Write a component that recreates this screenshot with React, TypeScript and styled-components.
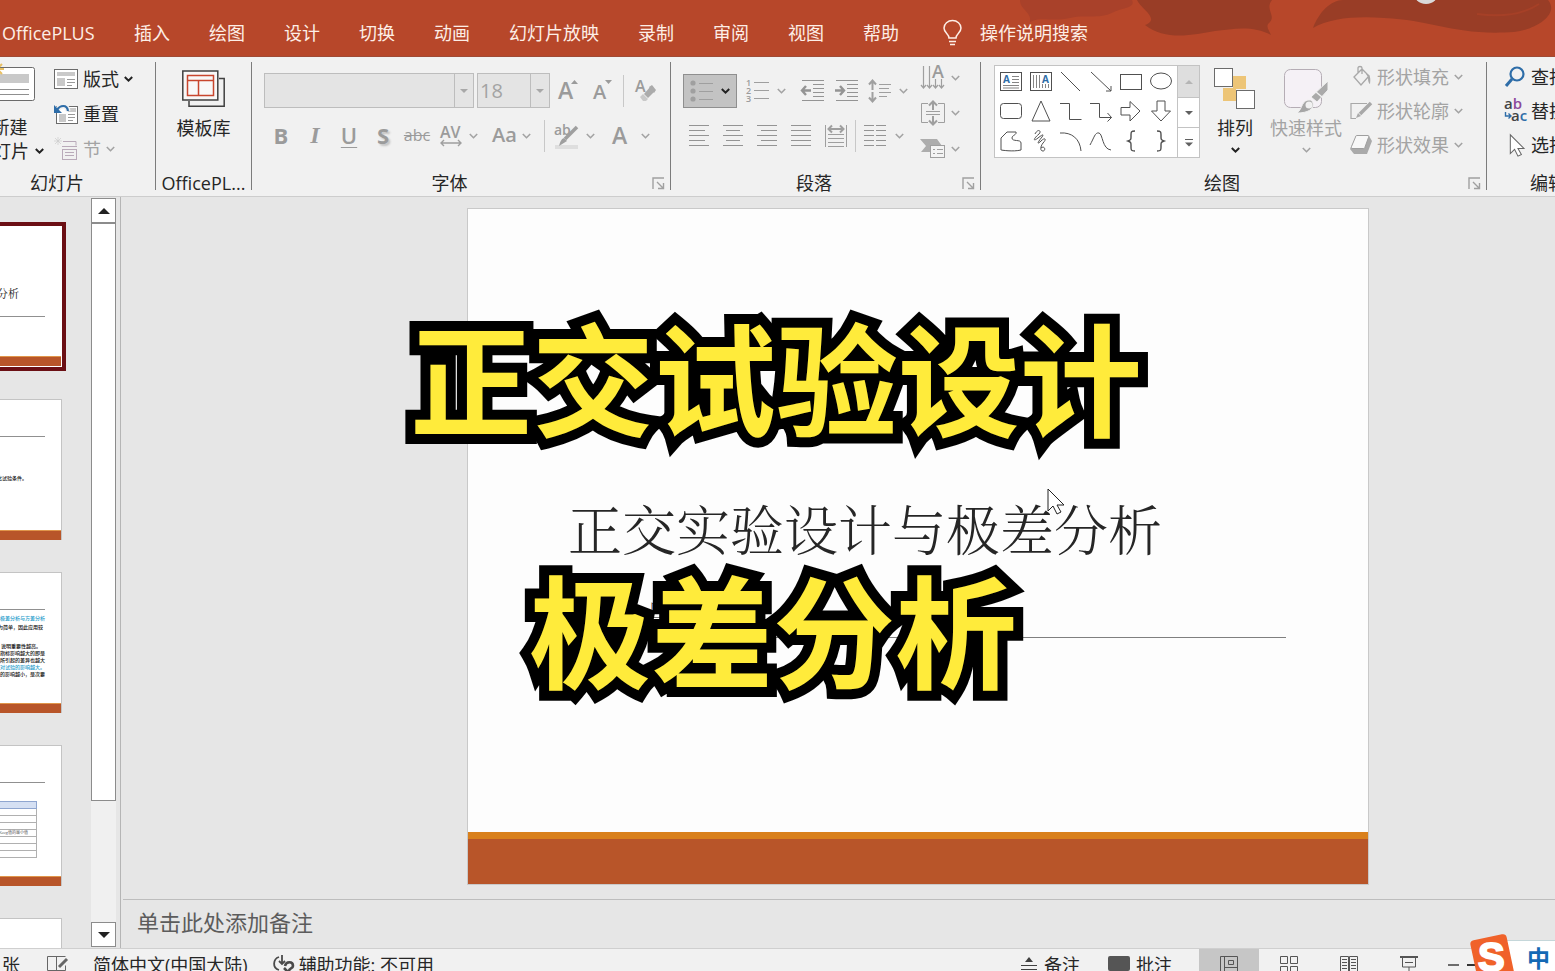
import React from 'react';
import styled, { createGlobalStyle, css } from 'styled-components';

const Global = createGlobalStyle`
  *, *::before, *::after { box-sizing: border-box; }
  body {
    margin: 0;
    font-family: 'Open Sans', 'Noto Sans CJK SC', sans-serif;
    font-size: 18px;
    line-height: 24px;
    color: #262626;
    background: #e6e6e6;
  }
  button, select, input, textarea { font: inherit; color: inherit; margin: 0; }
  button { background: none; border: 0; padding: 0; }
`;

const ink = '#404040';
const dim = '#a3a3a3';

/* ---------- shell ---------- */

const Shell = styled.div`
  position: relative;
  display: flex;
  flex-direction: column;
  height: 100vh;
  overflow: hidden;
`;

const TabBar = styled.header`
  position: relative;
  flex: none;
  height: 57px;
  padding: 9px 0 0 2px;
  background: #b7472a;
  border-bottom: 1px solid #a04a35;
  overflow: hidden;
`;

const Artwork = styled.svg`
  position: absolute;
  top: 0;
  right: 0;
`;

const Tabs = styled.nav`
  position: relative;
  display: flex;
  align-items: center;
  gap: 39px;
  height: 47px;
`;

const Tab = styled.button`
  flex: none;
  color: #fdeee6;
  white-space: nowrap;
`;

const FirstTab = styled(Tab)`
  width: 93px;
  text-align: left;
`;

const Search = styled(Tab)`
  display: flex;
  align-items: center;
  gap: 18px;
  margin-left: 5px;
`;

/* ---------- ribbon ---------- */

const Ribbon = styled.div`
  flex: none;
  display: flex;
  height: 140px;
  background: #f1f1f1;
  border-bottom: 1px solid #cdcdcd;
  overflow: hidden;
`;

const Divider = styled.div`
  flex: none;
  width: 1px;
  margin: 5px 0 6px;
  background: #7c7c7c;
`;

const Group = styled.section<{ $w: number; $shift?: number }>`
  flex: none;
  display: flex;
  flex-direction: column;
  width: ${(p) => p.$w}px;
  margin-left: ${(p) => p.$shift ?? 0}px;
`;

const GroupBody = styled.div<{ $pad?: string }>`
  display: flex;
  height: 114px;
  padding: ${(p) => p.$pad ?? '0'};
`;

const GroupFoot = styled.div`
  display: flex;
  align-items: center;
  height: 24px;
  padding: 0 5px;
`;

const GroupTitle = styled.h2<{ $inset?: boolean }>`
  flex: 1;
  margin: 0;
  padding-right: ${(p) => (p.$inset ? 10 : 0)}px;
  font-size: 18px;
  line-height: 24px;
  font-weight: 400;
  text-align: center;
  white-space: nowrap;
`;

const Column = styled.div<{ $gap?: number; $ml?: number }>`
  flex: none;
  display: flex;
  flex-direction: column;
  gap: ${(p) => p.$gap ?? 0}px;
  margin-left: ${(p) => p.$ml ?? 0}px;
`;

const Row = styled.div<{ $h: number }>`
  display: flex;
  align-items: center;
  height: ${(p) => p.$h}px;
`;

const Rule = styled.div<{ $m: string }>`
  width: 1px;
  height: 32px;
  margin: ${(p) => p.$m};
  background: #c8c8c8;
`;

const Tool = styled.button<{ $w: number; $on?: boolean; $gap?: number }>`
  flex: none;
  display: flex;
  align-items: center;
  justify-content: center;
  gap: ${(p) => p.$gap ?? 7}px;
  width: ${(p) => p.$w}px;
  height: 34px;
  color: ${dim};
  ${(p) =>
    p.$on &&
    css`
      background: #c3c3c3;
      border: 1px solid #8f8f8f;
      color: #222;
    `}
`;

const Line = styled.button<{ $h: number; $off?: boolean }>`
  flex: none;
  display: flex;
  align-items: center;
  gap: 5px;
  height: ${(p) => p.$h}px;
  white-space: nowrap;
  color: ${(p) => (p.$off ? dim : '#262626')};
`;

const Big = styled.button<{ $w: number; $off?: boolean; $pt?: number }>`
  flex: none;
  display: flex;
  flex-direction: column;
  align-items: center;
  width: ${(p) => p.$w}px;
  padding-top: ${(p) => p.$pt ?? 0}px;
  white-space: nowrap;
  color: ${(p) => (p.$off ? dim : '#262626')};
`;

const BigCaption = styled.span<{ $m?: string }>`
  display: flex;
  align-items: center;
  gap: 6px;
  margin: ${(p) => p.$m ?? '0'};
`;

const Combo = styled.label<{ $w: number }>`
  display: flex;
  width: ${(p) => p.$w}px;
  height: 35px;
  background: #e4e4e4;
  border: 1px solid #bdbdbd;
  & + & { margin-left: 3px; }
`;

const ComboSelect = styled.select`
  appearance: none;
  flex: 1;
  min-width: 0;
  padding: 0 2px;
  border: 0;
  background: transparent;
  font-size: 20px;
  line-height: 24px;
  color: ${dim};
  opacity: 1;
`;

const ComboArrow = styled.span`
  display: flex;
  align-items: center;
  justify-content: center;
  width: 19px;
  border-left: 1px solid #bdbdbd;
`;

const Glyph = styled.span<{ $size?: number; $weight?: number; $deco?: string }>`
  padding-bottom: 3px;
  font-size: ${(p) => p.$size ?? 22}px;
  line-height: 26px;
  font-weight: ${(p) => p.$weight ?? 600};
  color: #9b9b9b;
  text-decoration: ${(p) => p.$deco ?? 'none'};
  text-decoration-thickness: 1px;
  text-underline-offset: 3px;
`;

const Italic = styled(Glyph)`
  font-family: 'Liberation Serif', serif;
  font-style: italic;
`;

const Shadowed = styled(Glyph)`
  text-shadow: 2px 2px 2px #c4c4c4;
`;

const Gallery = styled.div`
  display: flex;
  width: 206px;
  height: 93px;
  border: 1px solid #c3c3c3;
  background: #fff;
`;

const Shapes = styled.div`
  flex: 1;
  display: grid;
  grid-template-columns: repeat(6, 30px);
  grid-template-rows: repeat(3, 30px);
  padding: 0 0 0 1px;
`;

const ShapeButton = styled.button`
  display: flex;
  align-items: center;
  justify-content: center;
`;

const GalleryNav = styled.div`
  display: grid;
  grid-template-rows: 31px 1fr 1fr;
  width: 22px;
  border-left: 1px solid #c3c3c3;
`;

const NavButton = styled.button<{ $off?: boolean }>`
  display: flex;
  align-items: center;
  justify-content: center;
  background: ${(p) => (p.$off ? '#dedede' : '#fff')};
  & + & { border-top: 1px solid #c3c3c3; }
`;

/* ---------- work area ---------- */

const Workspace = styled.div`
  flex: 1;
  min-height: 0;
  display: flex;
  background: #e6e6e6;
`;

const ThumbPane = styled.aside`
  flex: none;
  width: 91px;
  overflow: hidden;
`;

const ThumbList = styled.ol`
  display: flex;
  flex-direction: column;
  gap: 32px;
  width: 188px;
  margin: 29px 0 0 -126px;
  padding: 0;
  list-style: none;
`;

const Thumb = styled.li<{ $selected?: boolean }>`
  display: flex;
  flex-direction: column;
  align-items: flex-end;
  height: 141px;
  background: #fff;
  border: 1px solid #c4c4c4;
  border-bottom: 0;
  overflow: hidden;
  ${(p) =>
    p.$selected &&
    css`
      border: 1px solid #fff;
      outline: 4px solid #6b0f14;
    `}
`;

const ThumbFoot = styled.div`
  align-self: stretch;
  flex: none;
  height: 10px;
  margin-top: auto;
  background: #b85529;
  border-top: 1px solid #e0954a;
`;

const ThumbRule = styled.div<{ $top: number }>`
  flex: none;
  width: 154px;
  height: 1px;
  margin: ${(p) => p.$top}px 16px 0 0;
  background: #909090;
`;

const ThumbTitle = styled.div`
  margin: 57px 42px 0 0;
  font: 400 11px/18px 'SimSun', 'Noto Serif CJK SC', 'Noto Sans CJK SC', serif;
  white-space: nowrap;
`;

const ThumbText = styled.p<{ $top: number; $right: number }>`
  margin: ${(p) => p.$top}px ${(p) => p.$right}px 0 0;
  font-size: 5px;
  line-height: 7px;
  font-weight: 500;
  white-space: nowrap;
  text-align: right;
  color: #111;
`;

const Cyan = styled.span`
  color: #1d9ccb;
`;

const ThumbTable = styled.table`
  margin: 18px 24px 0 0;
  width: 140px;
  border-collapse: collapse;
  font-size: 4px;
  line-height: 6px;
  color: #555;
  th, td {
    height: 7px;
    padding: 0 8px 0 0;
    border: 1px solid #b0b0b0;
    font-weight: 400;
    text-align: right;
  }
  th { background: #d5e0f3; border-color: #8fa6d0; }
  td:first-child { width: 60px; }
`;

const ScrollBar = styled.div`
  flex: none;
  display: flex;
  flex-direction: column;
  width: 25px;
  margin: 1px 4px 1px 0;
  background: #f0f0f0;
`;

const ScrollButton = styled.button`
  display: flex;
  align-items: center;
  justify-content: center;
  height: 25px;
  background: #fff;
  border: 1px solid #8c8c8c;
`;

const ScrollThumb = styled.div`
  flex: 0 1 578px;
  background: #fff;
  border: 1px solid #8c8c8c;
`;

const ScrollTrack = styled.div`
  flex: 1 0 121px;
`;

const Editor = styled.main`
  flex: 1;
  min-width: 0;
  display: flex;
  flex-direction: column;
  border-left: 1px solid #b5b5b5;
  padding-left: 2px;
`;

const Canvas = styled.div`
  flex: 1;
  min-height: 0;
  display: flex;
  justify-content: center;
  align-items: flex-start;
  padding: 11px 0 0 158px;
`;

const Slide = styled.article`
  flex: none;
  display: flex;
  flex-direction: column;
  width: 902px;
  height: 677px;
  background: #fdfdfd;
  border: 1px solid #c9c9c9;
`;

const SlideTitle = styled.h1`
  margin: 283px 0 0 100px;
  font: 300 54px/72px 'SimSun', 'Noto Serif CJK SC', 'Noto Sans CJK SC', serif;
  white-space: nowrap;
  color: #262626;
`;

const SlideAuthor = styled.p`
  margin: 28px 0 0 180px;
  font: 300 22px/32px 'SimSun', 'Noto Serif CJK SC', 'Noto Sans CJK SC', serif;
  color: #555;
`;

const SlideRule = styled.div`
  height: 1px;
  margin: 13px 82px 0 81px;
  background: #7f7f7f;
`;

const SlideFoot = styled.div`
  height: 52px;
  margin-top: auto;
  background: #b85529;
  border-top: 7px solid #d9801c;
`;

const Notes = styled.textarea`
  flex: none;
  height: 49px;
  padding: 7px 14px;
  border: 0;
  border-top: 1px solid #bdbdbd;
  background: transparent;
  resize: none;
  overflow: hidden;
  font-size: 22px;
  line-height: 30px;
  &::placeholder { color: #5c5c5c; opacity: 1; }
`;

/* ---------- status bar ---------- */

const StatusBar = styled.footer`
  flex: none;
  height: 23px;
  overflow: hidden;
  background: #f1f1f1;
  border-top: 1px solid #cfcfcf;
`;

const StatusItems = styled.div`
  display: flex;
  align-items: center;
  height: 31px;
  white-space: nowrap;
`;

const StatusButton = styled.button<{ $m?: string }>`
  flex: none;
  display: flex;
  align-items: center;
  gap: 6px;
  margin: ${(p) => p.$m ?? '0'};
`;

const Spacer = styled.div`
  flex: 1;
`;

const View = styled.button<{ $on?: boolean }>`
  flex: none;
  display: flex;
  align-items: center;
  justify-content: center;
  width: 60px;
  height: 32px;
  background: ${(p) => (p.$on ? '#c6c6c6' : 'transparent')};
`;

const ZoomArea = styled.div`
  flex: none;
  width: 116px;
  padding-left: 8px;
  display: flex;
  align-items: center;
  gap: 8px;
`;

/* ---------- overlays ---------- */

const Ime = styled.div`
  position: absolute;
  right: 0;
  bottom: 0;
  display: flex;
  align-items: flex-end;
  width: 86px;
  height: 38px;
`;

const ImePanel = styled.div`
  flex: 1;
  height: 31px;
  margin-left: -30px;
  padding: 4px 5px 0 0;
  background: #fff;
  border-top: 1px solid #c5d7da;
  text-align: right;
  font-size: 23px;
  line-height: 26px;
  font-weight: 700;
  color: #1469b4;
`;

const ImeLogo = styled.svg`
  position: relative;
  z-index: 1;
  flex: none;
`;

const Caption = styled.p<{ $x: number; $y: number }>`
  position: absolute;
  left: ${(p) => p.$x}px;
  top: ${(p) => p.$y}px;
  margin: 0;
  font: 700 122px/150px 'Noto Sans CJK SC', sans-serif;
  color: #ffeb3b;
  -webkit-text-stroke: 20px #000;
  paint-order: stroke fill;
  white-space: nowrap;
`;

const Pointer = styled.svg`
  position: absolute;
  left: 1047px;
  top: 488px;
`;

/* ---------- icons ---------- */

const Svg = styled.svg`
  flex: none;
  overflow: visible;
`;

type IconProps = { w: number; h: number; children: React.ReactNode; color?: string; sw?: number };
const Icon = ({ w, h, children, color = '#9f9f9f', sw = 1 }: IconProps) => (
  <Svg width={w} height={h} viewBox={`0 0 ${w} ${h}`} fill="none" stroke={color} strokeWidth={sw} aria-hidden="true">
    {children}
  </Svg>
);

const Chevron = ({ dark }: { dark?: boolean }) => (
  <Icon w={9} h={6} color={dark ? '#222' : dim} sw={dark ? 2 : 1.6}>
    <path d="M.8 1l3.700 3.700L8.200 1" />
  </Icon>
);

const Triangle = ({ up, color = '#222', w = 12, h = 6 }: { up?: boolean; color?: string; w?: number; h?: number }) => (
  <Icon w={w} h={h} color="none">
    <path d={up ? `M0 ${h}L${w / 2} 0L${w} ${h}z` : `M0 0L${w / 2} ${h}L${w} 0z`} fill={color} />
  </Icon>
);

const Launcher = () => (
  <Icon w={13} h={13} color="#a0a0a0" sw={1.4}>
    <path d="M1 12V1h11M5 5l6 6M11.500 6v5.500H6" />
  </Icon>
);

const lines = (rows: [number, number, number][]) => rows.map(([x1, x2, y]) => `M${x1} ${y}H${x2}`).join('');

const Lines = ({ rows, w = 22 }: { rows: [number, number, number][]; w?: number }) => (
  <Icon w={w} h={22} color="#949494">
    <path d={lines(rows)} />
  </Icon>
);

const fiveRows = (a: [number, number], b: [number, number]) =>
  [0, 1, 2, 3, 4].map((i) => {
    const [s, e] = i % 2 ? b : a;
    return [s, e, 0.5 + i * 5] as [number, number, number];
  });

const shapeIcons: { name: string; art: React.ReactNode }[] = [
  {
    name: '文本框',
    art: (
      <>
        <rect x=".5" y="2.500" width="21" height="18" />
        <path d="M12 6.500h7M12 9.500h7M12 12.500h7M3 15.500h16M3 18h16" strokeWidth=".7" />
        <text x="3" y="13" fontSize="10" fontWeight="700" fill="#2e6da8" stroke="none">A</text>
      </>
    ),
  },
  {
    name: '竖排文本框',
    art: (
      <>
        <rect x=".5" y="2.500" width="21" height="18" />
        <path d="M3.500 5v13M6.500 5v13M9.500 5v13M12.500 14v4M15.500 14v4M18.500 14v4" strokeWidth=".7" />
        <text x="12" y="13" fontSize="10" fontWeight="700" fill="#2e6da8" stroke="none">A</text>
      </>
    ),
  },
  { name: '直线', art: <path d="M1 2l19 19" /> },
  { name: '箭头', art: <path d="M1 2l20 19M21 16v5h-5" /> },
  { name: '矩形', art: <rect x=".5" y="4.500" width="21" height="15" /> },
  { name: '椭圆', art: <ellipse cx="11" cy="11" rx="10.500" ry="8" /> },
  { name: '圆角矩形', art: <rect x=".5" y="3.500" width="21" height="15" rx="3" /> },
  { name: '三角形', art: <path d="M11 1L20 21H2z" /> },
  { name: '肘形连接符', art: <path d="M0 3.500h9.500v16h12" /> },
  { name: '肘形箭头', art: <path d="M0 3.500h9.500v14h12M17.500 13l4 4.500-4 4" /> },
  { name: '右箭头', art: <path d="M1 7.500h9v-6l10 9.500-10 10v-6H1z" /> },
  { name: '下箭头', art: <path d="M7 1h8v10h5.500L11 21 1.500 11H7z" /> },
  { name: '任意多边形', art: <path d="M1 8l6-6h9c1 3-4 3-4 6 0 4 9 1 9 5v7c-8 2-20 0-20 0z" /> },
  { name: '自由曲线', art: <path d="M5 4c3-6 7-3 4 0-6 5-6 8-1 4s6-4 4-1c-5 6-5 8-1 4s6-2 2 2c-3 4-3 8 0 8s2-6-2-3" /> },
  { name: '弧形', art: <path d="M0 3c12-1 20 6 21 18" /> },
  { name: '曲线', art: <path d="M0 15C4 8 5 2 9 3s3 16 12 17" /> },
  { name: '左大括号', art: <path d="M15 1c-4 0-4 1-4 4v2c0 2 0 3-3 4 3 1 3 2 3 4v2c0 3 0 4 4 4" strokeWidth="1.400" /> },
  { name: '右大括号', art: <path d="M7 1c4 0 4 1 4 4v2c0 2 0 3 3 4-3 1-3 2-3 4v2c0 3 0 4-4 4" strokeWidth="1.400" /> },
];

const LayoutIcon = () => (
  <Icon w={24} h={20} color="#6b6b6b">
    <rect x=".5" y=".5" width="23" height="19" fill="#fff" />
    <path d="M3 3h18v4H3zM3 9h8v8H3z" fill="#c9c9c9" stroke="none" />
    <path d="M13 10.500h8M13 13.500h8M13 16.500h5" stroke="#999" />
  </Icon>
);

const ResetIcon = () => (
  <Icon w={24} h={20} color="#6b6b6b">
    <rect x="2.500" y="2.500" width="21" height="17" fill="#fff" />
    <path d="M14 4h8v4h-8zM5 10h7v8H5z" fill="#c9c9c9" stroke="none" />
    <path d="M14 10.500h7M14 13.500h7M14 16.500h5" stroke="#999" />
    <path d="M3 6C6 1 13 0 14 7" stroke="#f1f1f1" strokeWidth="5" />
    <path d="M3 6C6 1 13 0 14 7" stroke="#2e6da8" strokeWidth="2.200" />
    <path d="M0 1v8h8z" fill="#2e6da8" stroke="none" />
  </Icon>
);

const SectionIcon = () => (
  <Icon w={24} h={24} color="#b9aab9">
    <path d="M1 1l6 6M7 1L1 7M4 0v8M0 4h8" strokeWidth=".7" stroke="#ccc" />
    <path d="M9 4.500h13V8.500M8 9.500h15" />
    <rect x="8.500" y="12.500" width="14" height="10" />
    <path d="M11 15.500h9M11 18.500h9" />
  </Icon>
);

const NewSlideIcon = () => (
  <Icon w={50} h={44} color="#6b6b6b">
    <rect x=".5" y="6.500" width="49" height="33" rx="2" fill="#fff" />
    <path d="M5 13h39v9H5z" fill="#c9c9c9" stroke="none" />
    <path d="M5 28.500h39M5 33.500h39" stroke="#8f8f8f" />
    <path d="M12 1v14M4 8h15M7 3l10 10M17 3L7 13" stroke="#e9c063" strokeWidth="2" />
  </Icon>
);

const TemplateIcon = () => (
  <Icon w={44} h={38} color={ink} sw={1.5}>
    <path d="M7 31v5.200h35.200V8.500H37" />
    <rect x=".8" y="1" width="35" height="29" fill="#f8f8f8" />
    <path d="M5.500 5.500h26v20h-26zM5.500 10.500h26M16.500 10.500v15" stroke="#c8462e" />
  </Icon>
);

const EraserIcon = () => (
  <Icon w={22} h={22} color="none">
    <text x="0" y="12" fontSize="16" fontWeight="600" fill="#9b9b9b">A</text>
    <path d="M15 8l4 5-6 6-4-4z" fill="#ababab" transform="translate(0 -1)" />
    <path d="M14 7l3-2 4 5-2 3z" fill="#ababab" />
    <path d="M8 14l5 5-2 2h-3l-3-4z" fill="#c9c9c9" />
  </Icon>
);

const SpacingIcon = () => (
  <Icon w={24} h={22}>
    <path d="M1 18h20M4 15l-3 3 3 3M18 15l3 3-3 3" strokeWidth="1.400" />
    <text x="0" y="13" fontSize="16" fontWeight="600" fill="#9b9b9b" stroke="none">AV</text>
  </Icon>
);

const HighlightIcon = () => (
  <Icon w={25} h={25}>
    <path d="M1 23h23" stroke="#dedede" strokeWidth="4" />
    <text x="0" y="11" fontSize="14" fontWeight="600" fill="#9b9b9b" stroke="none">ab</text>
    <path d="M23 3L11 15" strokeWidth="3.500" />
    <path d="M10 14l3 3-8 5c1-4 2-7 5-8z" fill="#9f9f9f" stroke="none" />
  </Icon>
);

const BulletIcon = () => (
  <Icon w={24} h={22} color="#9f9f9f">
    <g fill="#9f9f9f" stroke="none">
      <circle cx="3" cy="3" r="2.600" /><circle cx="3" cy="11" r="2.600" /><circle cx="3" cy="19" r="2.600" />
    </g>
    <path d="M9 3.500h14M9 11.500h14M9 19.500h14" />
  </Icon>
);

const NumberIcon = () => (
  <Icon w={24} h={24}>
    <g fontSize="9" fontWeight="600" fill="#9b9b9b" stroke="none">
      <text x="0" y="7">1</text><text x="0" y="15">2</text><text x="0" y="23">3</text>
    </g>
    <path d="M8 3.500h15M8 11.500h15M8 19.500h15" />
  </Icon>
);

const IndentIcon = ({ flip }: { flip?: boolean }) => (
  <Icon w={23} h={22} color="#949494">
    <path d="M1 .5h22M12 4.500h11M12 8.500h11M12 12.500h11M12 16.500h11M1 20.500h22" />
    <path d={flip ? 'M0 10.500h9M5 6l4 4.500-4 4.500' : 'M1 10.500h9M5 6l-4 4.500 4 4.500'} strokeWidth="2.400" />
  </Icon>
);

const LineSpaceIcon = () => (
  <Icon w={24} h={24}>
    <path d="M4.500 2v9M4.500 13v9M1 5.500l3.500-4 3.500 4M1 18.500l3.500 4 3.500-4" strokeWidth="2" />
    <path d="M11 5.500h12M11 9.500h10M11 13.500h12M11 17.500h8" />
  </Icon>
);

const DistributeIcon = () => (
  <Icon w={24} h={24}>
    <path d="M1.500 1v22M22.500 1v22M4 10.500h16M4 14.500h16M4 18.500h16M4 22.500h16" />
    <path d="M4 5h16M8 1.500L4.500 5 8 8.500M16 1.500L19.500 5 16 8.500" strokeWidth="2" />
  </Icon>
);

const DirectionIcon = () => (
  <Icon w={26} h={26} sw={1.2}>
    <path d="M3.500 1v22M9.500 1v22M15.500 14v9M21.500 14v9M1 20l2.500 3L6 20M7 20l2.500 3 2.500-3M13 20l2.500 3 2.500-3M19 20l2.500 3 2.500-3" />
    <text x="12" y="13" fontSize="18" fontWeight="600" fill="#9b9b9b" stroke="none">A</text>
  </Icon>
);

const AlignTextIcon = () => (
  <Icon w={26} h={26}>
    <path d="M8 3.500H1.500v19H8M18 3.500h6.500v19H18M6 11.500h14M6 14.500h14" />
    <path d="M13 10V2M13 16v8M9 5.500l4-4 4 4M9 20.500l4 4 4-4" strokeWidth="2" />
  </Icon>
);

const SmartArtIcon = () => (
  <Icon w={26} h={20}>
    <path d="M0 0h17l5 7H10v6H1l5-6z" fill="#adadad" stroke="none" />
    <rect x="10.500" y="6.500" width="14" height="12" fill="#f4f4f4" />
    <path d="M13 10.500h2M17 10.500h6M13 14.500h2M17 14.500h6" />
  </Icon>
);

const ArrangeIcon = () => (
  <Icon w={42} h={42} color="#6b6b6b">
    <path d="M19 8h13v13H19zM9 20h13v13H9z" fill="#edc577" stroke="none" />
    <rect x=".5" y=".5" width="18" height="18" fill="#fff" />
    <rect x="22.500" y="22.500" width="18" height="18" fill="#fff" />
  </Icon>
);

const QuickStyleIcon = () => (
  <Icon w={46} h={46} color="#b5adb5">
    <rect x="1.500" y="1.500" width="37" height="38" rx="6" fill="#f5f1f6" />
    <path d="M45 13v9L34 34l-6-5z" fill="#aaa" stroke="#f1f1f1" />
    <path d="M33 24l6 5" stroke="#f1f1f1" strokeWidth="1.500" />
    <path d="M28 32c5 5 2 13-14 13 6-4 4-14 14-13z" fill="#a6a6a6" stroke="#f1f1f1" />
    <circle cx="26" cy="37" r="3.500" fill="#f1f1f1" stroke="none" />
  </Icon>
);

const FillIcon = () => (
  <Icon w={22} h={22} color="#a8a8a8" sw={1.3}>
    <path d="M4 11l8-8 7 7-8 9zM8 7V2c0-2 4-2 4 0v6" />
    <path d="M16 8c4 0 5 4 4 10-2-1-2-5-2-7z" fill="#aaa" stroke="none" />
  </Icon>
);

const OutlineIcon = () => (
  <Icon w={22} h={22} color="#a8a8a8" sw={1.2}>
    <path d="M17 3.500H1v15h5" />
    <path d="M21 3L10 14" strokeWidth="3.600" />
    <path d="M8 13l3 3-5 2z" fill="#aaa" stroke="none" />
  </Icon>
);

const EffectIcon = () => (
  <Icon w={22} h={22} color="#9f9f9f">
    <path d="M7 2h12l3 5-5 13H4l-4-5z" fill="#aaa" stroke="none" />
    <path d="M8 1.500h9c2 0 2 0 1.500 2L15 13c0 1.500-1 1.500-2 1.500H3c-2 0-2 0-1.500-2L5.500 3c0-1.500 1-1.500 2.500-1.500z" fill="#f8f8f8" />
  </Icon>
);

const FindIcon = () => (
  <Icon w={22} h={22} color="#2e6da8" sw={2.2}>
    <circle cx="13" cy="8" r="6.500" />
    <path d="M8 13l-6 7" strokeWidth="3" />
  </Icon>
);

const ReplaceIcon = () => (
  <Icon w={22} h={24} color="#2e6da8" sw={1.4}>
    <path d="M1.500 13v4h5M4.500 14.500L7 17l-2.500 2.500" />
    <g fontSize="15" fontWeight="600" stroke="none">
      <text x="0" y="10" fill="#444">a<tspan fill="#8b4a9c">b</tspan></text>
      <text x="7" y="22" fill="#444">a<tspan fill="#2e6da8">c</tspan></text>
    </g>
  </Icon>
);

const arrowPath = 'M1 1v22l5-5 4 8 4-2-4-7h7z';

const SelectIcon = () => (
  <Svg width="22" height="23" viewBox="-5 0 23 27" fill="#fff" stroke="#666" strokeWidth="1.2" aria-hidden="true">
    <path d={arrowPath} />
  </Svg>
);

/* ---------- page ---------- */

const tabs = ['插入', '绘图', '设计', '切换', '动画', '幻灯片放映', '录制', '审阅', '视图', '帮助'];

export default function App() {
  return (
    <Shell>
      <Global />
      <TabBar>
        <Artwork width="575" height="56" viewBox="0 0 575 56" aria-hidden="true">
          <path d="M40 0h112c4 8-10 8-18 12-16 8-30 2-44 6-18 4-30-2-40 4 2-10-10-12-10-22z" fill="#a9412a" />
          <path d="M157 0h135c-8 10 6 16-4 24-2 4 2 8 3 11-18-10-38-6-56-4-22 4-50 10-70-6 16-6-4-16-8-25z" fill="#993d26" />
          <path d="M333 28c6-16 18-28 30-28h205c12 14-12 30-34 32-60 4-80-12-130-14-28-2-54 0-71 10z" fill="#993d26" />
          <path d="M497 14c30 4 50-2 62-10" stroke="#a64027" strokeWidth="2" fill="none" />
          <circle cx="446" cy="-9" r="13" fill="#d9d9d9" />
        </Artwork>
        <Tabs>
          <FirstTab>OfficePLUS</FirstTab>
          {tabs.map((t) => (
            <Tab key={t}>{t}</Tab>
          ))}
          <Search>
            <Icon w={19} h={26} color="#fdeee6" sw={1.5}>
              <path d="M6 18c0-4-5-5-5-10a8.500 7.500 0 0 1 17 0c0 5-5 6-5 10zM6 21.500h7M7 24.500h5" />
            </Icon>
            操作说明搜索
          </Search>
        </Tabs>
      </TabBar>

      <Ribbon>
        <Group $w={196} $shift={-41}>
          <GroupBody $pad="4px 0 0 6px">
            <Big $w={89}>
              <NewSlideIcon />
              <BigCaption $m="10px 0 0">新建</BigCaption>
              <BigCaption>幻灯片 <Chevron dark /></BigCaption>
            </Big>
            <Column>
              <Line $h={35}><LayoutIcon />版式 <Chevron dark /></Line>
              <Line $h={35}><ResetIcon />重置</Line>
              <Line $h={35} $off><SectionIcon />节 <Chevron /></Line>
            </Column>
          </GroupBody>
          <GroupFoot><GroupTitle>幻灯片</GroupTitle></GroupFoot>
        </Group>
        <Divider />

        <Group $w={95}>
          <GroupBody $pad="13px 0 0">
            <Big $w={95}>
              <TemplateIcon />
              <BigCaption $m="8px 0 0">模板库</BigCaption>
            </Big>
          </GroupBody>
          <GroupFoot><GroupTitle>OfficePL...</GroupTitle></GroupFoot>
        </Group>
        <Divider />

        <Group $w={418}>
          <GroupBody $pad="16px 0 0 12px">
            <Column $gap={12}>
              <Row $h={35}>
                <Combo $w={210}>
                  <ComboSelect disabled aria-label="字体"><option> </option></ComboSelect>
                  <ComboArrow><Triangle color="#a8a8a8" w={8} h={4} /></ComboArrow>
                </Combo>
                <Combo $w={73}>
                  <ComboSelect disabled aria-label="字号"><option>18</option></ComboSelect>
                  <ComboArrow><Triangle color="#a8a8a8" w={8} h={4} /></ComboArrow>
                </Combo>
                <Tool $w={36} aria-label="增大字号">
                  <Icon w={22} h={24} color="none">
                    <text x="1" y="20" fontSize="23" fontWeight="600" fill="#9b9b9b">A</text>
                    <path d="M14 5l3.500-4L21 5z" fill="#9b9b9b" />
                  </Icon>
                </Tool>
                <Tool $w={34} aria-label="减小字号">
                  <Icon w={22} h={24} color="none">
                    <text x="1" y="20" fontSize="20" fontWeight="600" fill="#9b9b9b">A</text>
                    <path d="M13 1l3.500 4L20 1z" fill="#9b9b9b" />
                  </Icon>
                </Tool>
                <Rule $m="0 5px 0 3px" />
                <Tool $w={34} aria-label="清除格式"><EraserIcon /></Tool>
              </Row>
              <Row $h={32}>
                <Tool $w={34}><Glyph $weight={700}>B</Glyph></Tool>
                <Tool $w={34}><Italic $size={24}>I</Italic></Tool>
                <Tool $w={34}><Glyph $deco="underline">U</Glyph></Tool>
                <Tool $w={34}><Shadowed $weight={700}>S</Shadowed></Tool>
                <Tool $w={34}><Glyph $size={16} $weight={400} $deco="line-through">abc</Glyph></Tool>
                <Tool $w={49} $gap={5} aria-label="字符间距"><SpacingIcon /><Chevron /></Tool>
                <Tool $w={57} $gap={5}><Glyph $size={20}>Aa</Glyph><Chevron /></Tool>
                <Rule $m="0 3px 0 4px" />
                <Tool $w={52} aria-label="突出显示"><HighlightIcon /><Chevron /></Tool>
                <Tool $w={62} $gap={14}><Glyph $size={23}>A</Glyph><Chevron /></Tool>
              </Row>
            </Column>
          </GroupBody>
          <GroupFoot><GroupTitle $inset>字体</GroupTitle><Launcher /></GroupFoot>
        </Group>
        <Divider />

        <Group $w={309}>
          <GroupBody $pad="0 0 0 12px">
            <Column>
              <Row $h={68}>
                <Tool $w={54} $on aria-label="项目符号"><BulletIcon /><Chevron dark /></Tool>
                <Tool $w={58} aria-label="编号"><NumberIcon /><Chevron /></Tool>
                <Tool $w={34} aria-label="减少缩进"><IndentIcon /></Tool>
                <Tool $w={34} aria-label="增加缩进"><IndentIcon flip /></Tool>
                <Tool $w={49} aria-label="行距"><LineSpaceIcon /><Chevron /></Tool>
              </Row>
              <Row $h={22}>
                <Tool $w={34} aria-label="左对齐"><Lines rows={fiveRows([0, 20], [0, 16])} /></Tool>
                <Tool $w={34} aria-label="居中"><Lines rows={fiveRows([0, 20], [3, 17])} /></Tool>
                <Tool $w={34} aria-label="右对齐"><Lines rows={fiveRows([0, 20], [4, 20])} /></Tool>
                <Tool $w={34} aria-label="两端对齐"><Lines rows={fiveRows([0, 20], [0, 20])} /></Tool>
                <Tool $w={34} aria-label="分散对齐"><DistributeIcon /></Tool>
                <Rule $m="0 3px 0 2px" />
                <Tool $w={50} aria-label="分栏">
                  <Lines w={24} rows={[...fiveRows([0, 10], [0, 10]), ...fiveRows([12, 22], [12, 22])]} />
                  <Chevron />
                </Tool>
              </Row>
            </Column>
            <Column>
              <Row $h={42}><Tool $w={56} $gap={5} aria-label="文字方向"><DirectionIcon /><Chevron /></Tool></Row>
              <Row $h={28}><Tool $w={56} $gap={5} aria-label="对齐文本"><AlignTextIcon /><Chevron /></Tool></Row>
              <Row $h={44}><Tool $w={56} $gap={5} aria-label="SmartArt"><SmartArtIcon /><Chevron /></Tool></Row>
            </Column>
          </GroupBody>
          <GroupFoot><GroupTitle $inset>段落</GroupTitle><Launcher /></GroupFoot>
        </Group>
        <Divider />

        <Group $w={505}>
          <GroupBody $pad="8px 0 0 13px">
            <Gallery>
              <Shapes>
                {shapeIcons.map((s) => (
                  <ShapeButton key={s.name} aria-label={s.name}>
                    <Icon w={22} h={22} color="#505050">{s.art}</Icon>
                  </ShapeButton>
                ))}
              </Shapes>
              <GalleryNav>
                <NavButton $off aria-label="上一行"><Triangle up color="#b5b5b5" w={8} h={4} /></NavButton>
                <NavButton aria-label="下一行"><Triangle color="#606060" w={8} h={4} /></NavButton>
                <NavButton aria-label="其他">
                  <Icon w={8} h={8} color="#606060"><path d="M0 .5h8" /><path d="M0 3.500h8l-4 4z" fill="#606060" stroke="none" /></Icon>
                </NavButton>
              </GalleryNav>
            </Gallery>
            <Big $w={70} $pt={3}>
              <ArrangeIcon />
              <BigCaption $m="6px 0 7px">排列</BigCaption>
              <Chevron dark />
            </Big>
            <Big $w={72} $pt={3} $off>
              <QuickStyleIcon />
              <BigCaption $m="2px 0 7px">快速样式</BigCaption>
              <Chevron />
            </Big>
            <Column $ml={8}>
              <Line $h={24} $off><FillIcon />形状填充 <Chevron /></Line>
              <Line $h={44} $off><OutlineIcon />形状轮廓 <Chevron /></Line>
              <Line $h={24} $off><EffectIcon />形状效果 <Chevron /></Line>
            </Column>
          </GroupBody>
          <GroupFoot><GroupTitle $inset>绘图</GroupTitle><Launcher /></GroupFoot>
        </Group>
        <Divider />

        <Group $w={122}>
          <GroupBody $pad="3px 0 0 17px">
            <Column>
              <Line $h={34}><FindIcon />查找</Line>
              <Line $h={34}><ReplaceIcon />替换</Line>
              <Line $h={34}><SelectIcon />选择</Line>
            </Column>
          </GroupBody>
          <GroupFoot><GroupTitle>编辑</GroupTitle></GroupFoot>
        </Group>
      </Ribbon>

      <Workspace>
        <ThumbPane>
          <ThumbList>
            <Thumb $selected>
              <ThumbTitle>正交实验设计与极差分析</ThumbTitle>
              <ThumbRule $top={14} />
              <ThumbFoot />
            </Thumb>
            <Thumb>
              <ThumbRule $top={36} />
              <ThumbText $top={38} $right={34}>正交试验设计优化试验条件。</ThumbText>
              <ThumbFoot />
            </Thumb>
            <Thumb>
              <ThumbRule $top={36} />
              <ThumbText $top={5} $right={16}>数据分析的方法是<Cyan>极差分析与方差分析</Cyan></ThumbText>
              <ThumbText $top={2} $right={18}>直观分析法较为简单，因此应用较</ThumbText>
              <ThumbText $top={12} $right={20}>极差越大，说明重要性越高。</ThumbText>
              <ThumbText $top={0} $right={16}>
                因素的水平变化对指标影响越大的即是<br />
                因素的水平变化所引起的差异也越大<br />
                <Cyan>说明这个因素对试验的影响越大。</Cyan><br />
                因素的影响越小，是次要
              </ThumbText>
              <ThumbFoot />
            </Thumb>
            <Thumb>
              <ThumbRule $top={36} />
              <ThumbTable>
                <thead><tr><th scope="col"> </th><th scope="col"> </th></tr></thead>
                <tbody>
                  <tr><td /><td /></tr>
                  <tr><td /><td /></tr>
                  <tr><td /><td /></tr>
                  <tr><td /><td>Kavg值的最小值</td></tr>
                  <tr><td /><td /></tr>
                  <tr><td /><td /></tr>
                  <tr><td /><td /></tr>
                </tbody>
              </ThumbTable>
              <ThumbFoot />
            </Thumb>
            <Thumb />
          </ThumbList>
        </ThumbPane>
        <ScrollBar>
          <ScrollButton aria-label="向上滚动"><Triangle up /></ScrollButton>
          <ScrollThumb />
          <ScrollTrack />
          <ScrollButton aria-label="向下滚动"><Triangle /></ScrollButton>
        </ScrollBar>
        <Editor>
          <Canvas>
            <Slide>
              <SlideTitle>正交实验设计与极差分析</SlideTitle>
              <SlideAuthor>白</SlideAuthor>
              <SlideRule />
              <SlideFoot />
            </Slide>
          </Canvas>
          <Notes aria-label="备注" placeholder="单击此处添加备注" />
        </Editor>
      </Workspace>

      <StatusBar>
        <StatusItems>
          <StatusButton $m="0 27px 0 2px">张</StatusButton>
          <StatusButton $m="0 24px 0 0" aria-label="拼写检查">
            <Icon w={22} h={20} color="#666">
              <path d="M9.500 3v15M9.500 3.500H.5v14h9M9.500 3.500h9M9.500 17.500h9v-5" transform="translate(0 -2)" />
              <path d="M20 4l-8 8" strokeWidth="3" />
            </Icon>
          </StatusButton>
          <StatusButton $m="0 25px 0 0">简体中文(中国大陆)</StatusButton>
          <StatusButton>
            <Icon w={20} h={22} color="#4a4a4a" sw={1.8}>
              <path d="M6 3C0 5-1 14 6 16M9 1v9M6 7l3 3 3-3" />
              <path d="M12 12c1-5 8-5 8 0 0 3-5 2-4 6M11 14l5 5" strokeWidth="2.600" />
            </Icon>
            辅助功能: 不可用
          </StatusButton>
          <Spacer />
          <StatusButton $m="0 28px 0 0">
            <Icon w={18} h={20} color={ink}>
              <path d="M5 7l4-5 4 5z" fill={ink} stroke="none" /><path d="M1 10.500h16M1 14.500h16" />
            </Icon>
            备注
          </StatusButton>
          <StatusButton $m="0 27px 0 0">
            <Icon w={22} h={22} color="none">
              <path d="M2 2h18a2 2 0 0 1 2 2v11a2 2 0 0 1-2 2h-9l-4 4v-4H2a2 2 0 0 1-2-2V4a2 2 0 0 1 2-2z" fill="#555" />
            </Icon>
            批注
          </StatusButton>
          <View $on aria-label="普通视图">
            <Icon w={20} h={18} color="#555"><path d="M1.500 .5h17v15h-17zM5.500 .5v15M5.500 11.500h13M9.500 4.500h5v4h-5z" /></Icon>
          </View>
          <View aria-label="幻灯片浏览">
            <Icon w={20} h={18} color="#555"><path d="M1.500 .5h7v7h-7zM11.500 .5h7v7h-7zM1.500 10.500h7v7h-7zM11.500 10.500h7v7h-7z" /></Icon>
          </View>
          <View aria-label="阅读视图">
            <Icon w={20} h={18} color="#555"><path d="M1.500 .5h8v15h-8zM10.500 .5h8v15h-8zM3 3.500h5M3 6.500h5M3 9.500h5M3 12.500h5M12 3.500h5M12 6.500h5M12 9.500h5M12 12.500h5" /></Icon>
          </View>
          <View aria-label="幻灯片放映">
            <Icon w={20} h={18} color="#555"><path d="M1 1h18" strokeWidth="2" /><path d="M3.500 2v9h13V2M6 6.500h8M10 11v6M6 17h8" /></Icon>
          </View>
          <ZoomArea>
            <Icon w={12} h={4} color="#333"><path d="M1 2h11" strokeWidth="1.400" /></Icon>
            <Icon w={80} h={4} color="#333"><path d="M0 2h80" strokeWidth="2" /></Icon>
          </ZoomArea>
        </StatusItems>
      </StatusBar>

      <Caption $x={410} $y={299}>正交试验设计</Caption>
      <Caption $x={529} $y={551}>极差分析</Caption>
      <Pointer width="19" height="29" viewBox="0 0 19 29" fill="#fff" stroke="#222" strokeWidth="1" aria-hidden="true">
        <path d={arrowPath} />
      </Pointer>

      <Ime>
        <ImeLogo width="48" height="38" viewBox="0 0 48 38" aria-hidden="true">
          <rect x="4" y="4" width="37" height="44" rx="4" fill="#f0622a" transform="rotate(-12 22 22)" />
          <text x="9" y="38" fontFamily="Liberation Sans, sans-serif" fontSize="40" fontWeight="700" fill="#fff" stroke="#fff" strokeWidth="2">S</text>
        </ImeLogo>
        <ImePanel>中</ImePanel>
      </Ime>
    </Shell>
  );
}
